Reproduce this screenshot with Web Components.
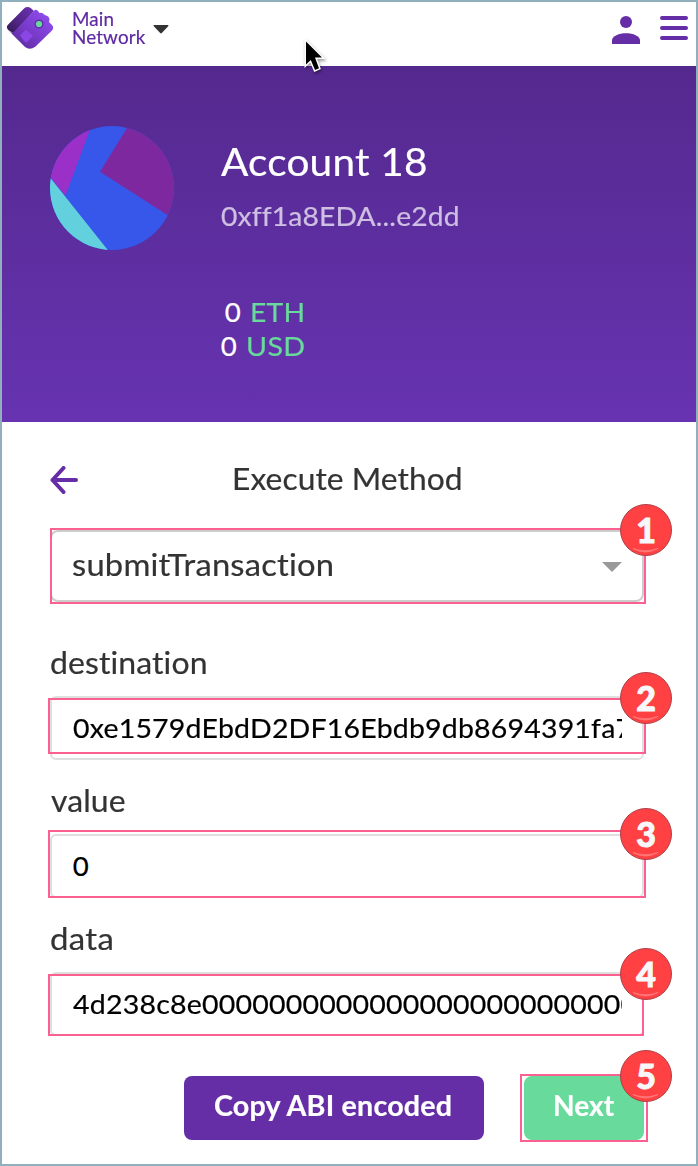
<!DOCTYPE html>
<html lang="en">
<head>
<meta charset="utf-8">
<title>Execute Method</title>
<style>
html,body{margin:0;padding:0;background:#fff}
body{font-family:Lato,"Noto Sans",sans-serif;color:#333}
</style>
</head>
<body>
<wallet-app></wallet-app>
<script>
const define=(name,html,init)=>{
  const t=document.createElement('template');t.innerHTML=html;
  customElements.define(name,class extends HTMLElement{
    constructor(){super();this.attachShadow({mode:'open'}).append(t.content.cloneNode(true));}
    connectedCallback(){if(init)init.call(this,this.shadowRoot);}
  });
};

/* Text run stretched so that the ink of its longest line spans the given width. */
const ctx=document.createElement('canvas').getContext('2d');
define('fit-text',`<style>:host{display:block;white-space:pre;font-variant-ligatures:none}span{display:inline-block;transform-origin:0 0;-webkit-text-stroke:.2px currentColor}</style><span><slot></slot></span>`,function(root){
  const size=+this.getAttribute('size'),line=this.getAttribute('line')||size*1.25;
  const weight=this.getAttribute('weight')||400,w=+this.getAttribute('width');
  const lines=this.textContent.split('\n'),s=root.querySelector('span');
  const text=lines.reduce((a,b)=>b.length>a.length?b:a);
  this.style.cssText+=`;font-size:${size}px;line-height:${line}px;height:${line*lines.length}px;font-weight:${weight}`;
  ctx.font=`${weight} ${size}px Lato, "Noto Sans", sans-serif`;
  const m=ctx.measureText(text),ink=m.actualBoundingBoxLeft+m.actualBoundingBoxRight;
  const track=w?Math.max(0,(w-ink)/(text.length-1))*.25:0;
  const k=w?w/(ink+track*(text.length-1)):1;
  s.style.letterSpacing=track+'px';
  s.style.marginLeft=m.actualBoundingBoxLeft*k+.8+'px';
  if(w)s.style.transform=`scaleX(${k})`;
});

define('step-badge',`<style>
:host{position:absolute;z-index:2;width:52px;height:52px;box-sizing:border-box;border-radius:50%;background:#ff4143;border:1.5px solid #b04046;display:flex;align-items:center;justify-content:center;color:#f8f8fa;font:900 34px/50px Lato,sans-serif}
svg{position:absolute;left:0;top:0;width:49px;height:49px}
b{font-weight:900;-webkit-text-stroke:.9px #f8f8fa;position:relative;top:0}
</style><b><slot></slot></b><svg viewBox="0 0 49 49"><path d="M12 43.5Q24.5 50.5 37 43.5Q24.5 48 12 43.5Z" fill="#ff7d80" stroke="#ff7d80" stroke-width=".7"/></svg>`);

define('mark-box',`<style>:host{position:absolute;box-sizing:border-box;border:2px solid #fb6190;z-index:1}</style>`);

define('app-header',`<style>
:host{display:flex;height:64px;background:#fff;box-sizing:border-box;padding:4px 8px 0 4px;position:relative}
.net{margin:4px 0 0 18px;color:#5f2aa3;width:75px}
.caret{margin:19px 0 0 6px}.user{margin:10px 0 0 auto}.menu{margin:10px 0 0 20px}
svg{display:block;flex:none}.cursor{position:absolute;left:298px;top:32px;z-index:5}
</style>
<svg width="48" height="46" viewBox="6 6 48 46">
<defs><linearGradient id="a" x1="0" y1="1" x2="1" y2="0"><stop stop-color="#32194f"/><stop offset=".45" stop-color="#53268a"/><stop offset="1" stop-color="#6a32b0"/></linearGradient>
<linearGradient id="b" x1="0" y1="1" x2="1" y2="0"><stop stop-color="#54298d"/><stop offset=".5" stop-color="#7a3cce"/><stop offset="1" stop-color="#9550f4"/></linearGradient></defs>
<path d="M8.2 24.4L24 8.4Q27.500 5.500 31 8.300L34 11L13.500 33.500L8.200 30Q5.500 27 8.200 24.400Z" fill="url(#a)"/>
<path d="M13 33L34.200 10.400Q36 9 38 11L39.500 13Q42.500 12 44 14.500L46 15.500Q49 16 49.500 19.500L49 22L52 25Q54.500 28 51.500 31L35.500 46.500Q29.500 51 24.500 46.500L8.500 30.500Q10.500 32.500 13 33Z" fill="url(#b)"/>
<path d="M20 35.500L26 29.500L33 36L26 43Z" fill="#8b47e5"/>
<circle cx="39" cy="24" r="4.600" fill="#6331a6"/><circle cx="39" cy="24" r="3.100" fill="#68d99a"/></svg>
<div class="net"><fit-text size="18.300" line="18" width="73">Main
Network</fit-text></div>
<svg class="caret" width="16" height="9" viewBox="0 0 16 9"><path d="M1 0H15Q16 .5 15.200 1.300L8.800 8Q8 8.800 7.200 8L.8 1.300Q0 .5 1 0Z" fill="#333"/></svg>
<svg class="user" width="28" height="28" viewBox="0 0 28 28" fill="#652da6"><circle cx="14" cy="6" r="6"/><path d="M0 28V24.500C0 20 7 17.300 14 17.300S28 20 28 24.500V28Z"/></svg>
<svg class="menu" width="28" height="28" viewBox="0 0 28 28" fill="#652da6"><rect width="28" height="4" rx="2"/><rect y="10" width="28" height="4" rx="2"/><rect y="20" width="28" height="4" rx="2"/></svg>
<svg class="cursor" width="32" height="44" viewBox="300 34 32 44" style="filter:drop-shadow(1px 2px 1.500px #0006)"><path d="M306 41.500L322 57.500H315L319 68.200L315 70L310.800 60L306 64.500Z" fill="#000" stroke="#fff" stroke-width="3" paint-order="stroke"/></svg>`);

define('account-panel',`<style>
:host{display:grid;grid-template-columns:170px 1fr;height:356px;box-sizing:border-box;padding:60px 48px 0;background:linear-gradient(#54298e,#6733b1);color:#fff}
svg{display:block}.name{margin-top:11px}.addr{margin-top:13px;color:#cebfe3}
.bal{margin-top:61px;width:85px}.row{display:flex;justify-content:space-between;height:34px}
.u{color:#68da9b}
</style>
<svg width="124" height="124" viewBox="0 0 124 124"><defs><clipPath id="c"><circle cx="62" cy="62" r="62"/></clipPath></defs><g clip-path="url(#c)"><path fill="#3657e9" d="M0 0H124V124H0Z"/><path fill="#9b30c9" d="M42 -2L15.300 70L-10 38V-2Z"/><path fill="#62d1dd" d="M-4 46.500L61 128H-4Z"/><path fill="#7d289f" d="M79.500 -2L50 45.700L126 94.500V-2Z"/></g></svg>
<div><fit-text class="name" size="39.400" line="48" width="204.500">Account 18</fit-text>
<fit-text class="addr" size="27.600" line="36" width="236">0xff1a8EDA...e2dd</fit-text>
<div class="bal"><div class="row"><fit-text style="margin-left:4px" size="27.600" line="34">0</fit-text><fit-text class="u" style="width:54px" size="27.600" line="34" width="51">ETH</fit-text></div>
<div class="row"><fit-text size="27.600" line="34">0</fit-text><fit-text class="u" style="width:58px" size="27.600" line="34" width="56">USD</fit-text></div></div></div>`);

define('text-field',`<style>
:host{display:block;position:relative;height:64px;box-sizing:border-box;border:2px solid #dfdfdf;border-radius:6px;background:#fff;color:#000;padding:0 20px}
.clip{overflow:hidden;height:60px;padding-top:12px;box-sizing:border-box}
</style><div class="clip"><slot></slot></div><slot name="mark"></slot>`);

define('select-field',`<style>
:host{display:flex;position:relative;height:72px;box-sizing:border-box;border:2px solid #ccc;border-radius:8px;padding:12px 20px 0;justify-content:space-between}
i{margin-top:18px;border:10px solid transparent;border-top-color:#999;border-bottom:0;height:0}
</style><slot></slot><i></i><slot name="mark"></slot>`);

define('action-button',`<style>
:host{display:block;position:relative;height:64px;box-sizing:border-box;padding:11px 0 0 30px;border-radius:8px;background:var(--fill);color:#fff}
</style><slot></slot><slot name="mark"></slot>`);

define('method-form',`<style>
:host{display:flex;flex-direction:column;padding:0 52px 0 48px;height:742px;box-sizing:border-box;background:#fff}
.head{display:grid;grid-template-columns:183px 1fr;height:108px;box-sizing:border-box;padding-top:36px}
.head svg{margin-top:8px;display:block}
.label{margin-top:21px;margin-bottom:15px}
.first{margin-top:41px;margin-bottom:15px}
.buttons{display:flex;justify-content:flex-end;gap:40px;margin-top:40px}
</style>
<div class="head"><svg width="28" height="28" viewBox="0 0 28 28"><path d="M26 14H2.500M13.500 2L2.500 14L13.500 26" fill="none" stroke="#652da6" stroke-width="4" stroke-linecap="round" stroke-linejoin="round"/></svg><fit-text size="31.500" line="40" width="227">Execute Method</fit-text></div>
<select-field><fit-text size="31.500" line="40" width="260">submitTransaction</fit-text><mark-box slot="mark" style="left:-2px;top:-4px;width:596px;height:76px"></mark-box><step-badge slot="mark" style="left:568px;top:-28px">1</step-badge></select-field>
<fit-text class="first" size="31.500" line="38" width="156">destination</fit-text>
<text-field><fit-text size="27.600" line="36" width="558">0xe1579dEbdD2DF16Ebdb9db8694391fa7</fit-text><mark-box slot="mark" style="left:-4px;top:0;width:598px;height:56px"></mark-box><step-badge slot="mark" style="left:568px;top:-26px">2</step-badge></text-field>
<fit-text class="label" size="31.500" line="38" width="74">value</fit-text>
<text-field><fit-text size="27.600" line="36">0</fit-text><mark-box slot="mark" style="left:-4px;top:-6px;width:598px;height:68px"></mark-box><step-badge slot="mark" style="left:568px;top:-28px">3</step-badge></text-field>
<fit-text class="label" size="31.500" line="38" width="61">data</fit-text>
<text-field><fit-text size="27.600" line="36" width="564">4d238c8e00000000000000000000000000</fit-text><mark-box slot="mark" style="left:-4px;top:0;width:596px;height:62px"></mark-box><step-badge slot="mark" style="left:568px;top:-26px">4</step-badge></text-field>
<div class="buttons"><action-button style="width:300px;--fill:#652da6"><fit-text size="27.600" line="38" weight="700" width="237">Copy ABI encoded</fit-text></action-button>
<action-button style="width:120px;--fill:#68da9b"><fit-text size="27.600" line="38" weight="700" width="60">Next</fit-text><mark-box slot="mark" style="left:-4px;top:-2px;width:128px;height:68px"></mark-box><step-badge slot="mark" style="left:96px;top:-26px">5</step-badge></action-button></div>`);

define('wallet-app',`<style>:host{display:block;width:698px;height:1166px;box-sizing:border-box;border:2px solid #91b0be;overflow:hidden}</style><app-header></app-header><account-panel></account-panel><method-form></method-form>`);
</script>
</body>
</html>
